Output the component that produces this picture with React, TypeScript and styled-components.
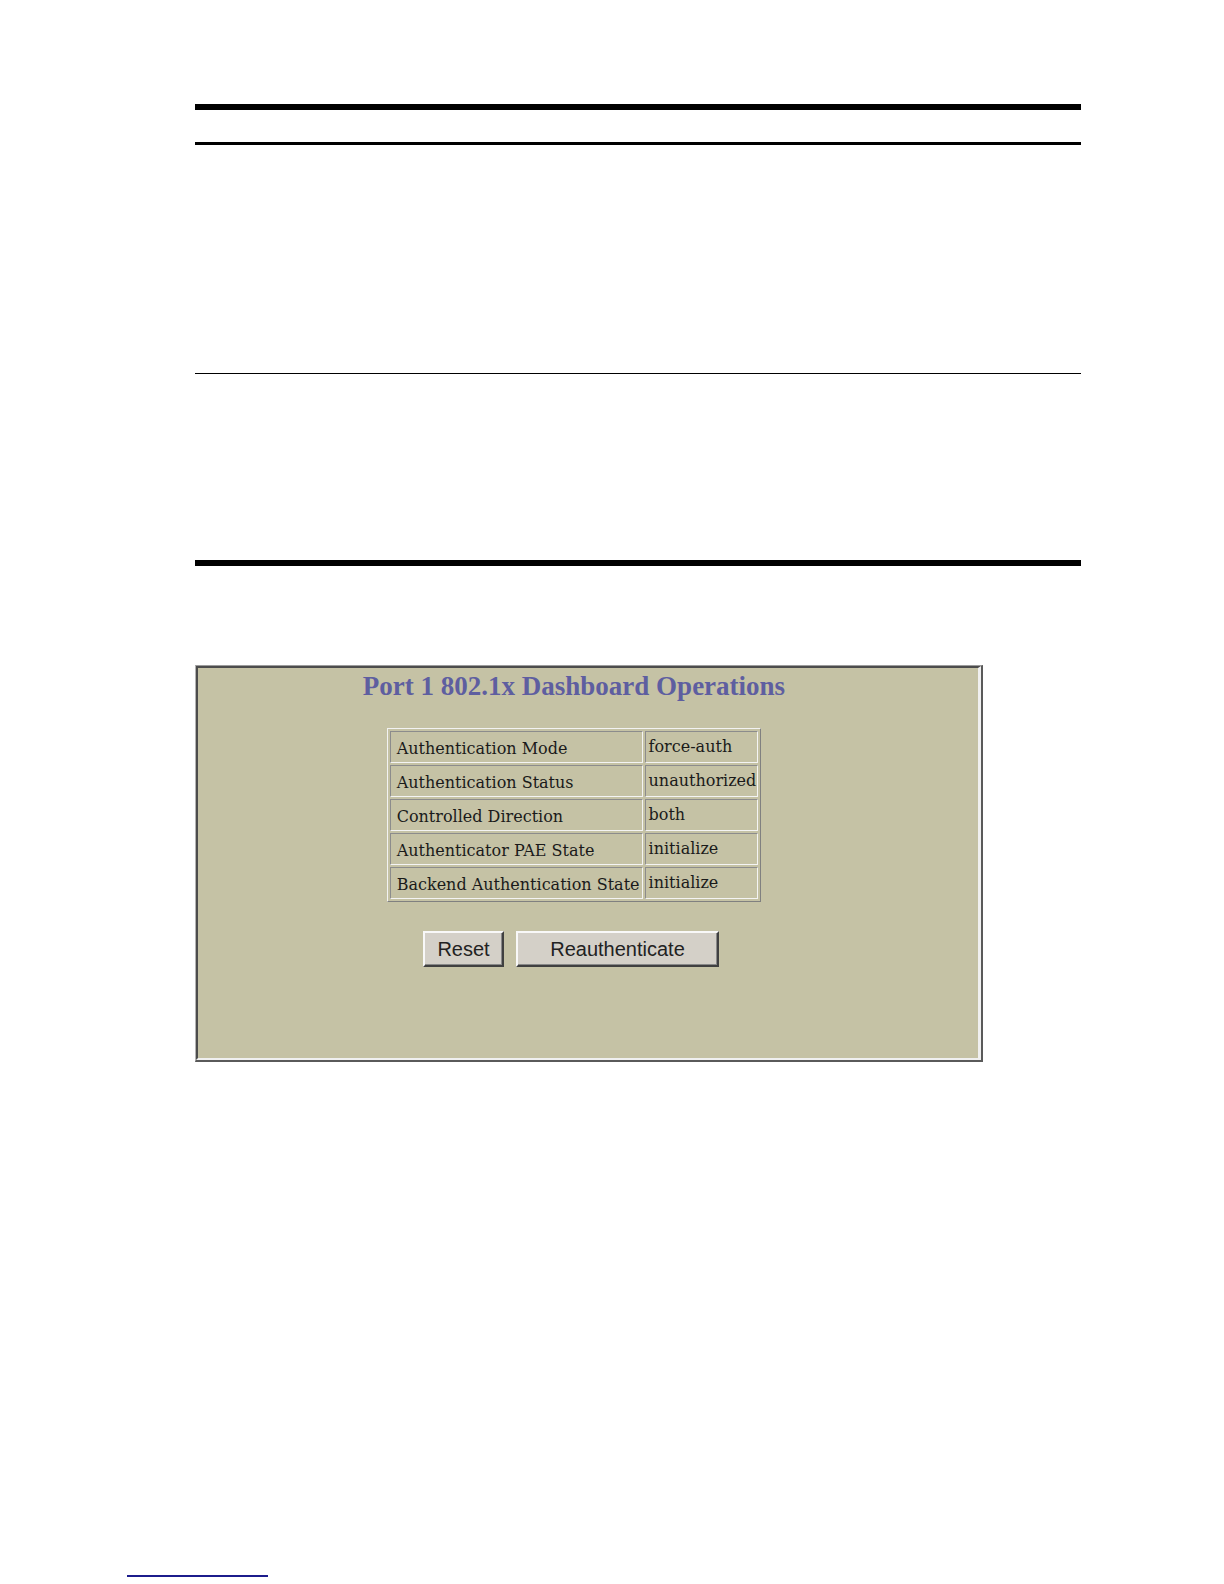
import styled, { createGlobalStyle } from "styled-components";

const GlobalStyle = createGlobalStyle`
  html, body {
    margin: 0;
    padding: 0;
    background: #fff;
  }
  body {
    font-family: "Liberation Serif", "Times New Roman", serif;
    color: #000;
  }
`;

const Page = styled.div`
  width: 1224px;
  height: 1584px;
  padding: 104px 0 0 195px;
  box-sizing: border-box;
  display: flex;
  flex-direction: column;
`;

const Rule = styled.div<{ $h: number; $gap: number }>`
  width: 886px;
  height: ${(p) => p.$h}px;
  margin-top: ${(p) => p.$gap}px;
  background: #000;
`;

const Frame = styled.div`
  margin-top: 99px;
  width: 788px;
  height: 397px;
  box-sizing: border-box;
  border-style: solid;
  border-width: 1px 2px 2px 1px;
  border-color: #9c9c9c #5a5a5a #5a5a5a #b4b4b4;
`;

const Panel = styled.div`
  height: 100%;
  box-sizing: border-box;
  border-style: solid;
  border-width: 2px 3px 2px 2px;
  border-color: #4c4c4c #f0f0f0 #f0f0f0 #4c4c4c;
  background: #c5c2a5;
  padding: 3px 28px 0 0;
  display: flex;
  flex-direction: column;
  align-items: center;
`;

const Title = styled.h1`
  margin: 0;
  font-family: "Liberation Serif", "Times New Roman", serif;
  font-size: 27px;
  line-height: 30px;
  font-weight: bold;
  color: #5e5ea0;
`;

const Table = styled.table`
  margin-top: 27px;
  border-collapse: separate;
  border-spacing: 2px;
  border-style: solid;
  border-width: 1px;
  border-color: #f2f2f2 #808080 #808080 #f2f2f2;
`;

const Cell = styled.td<{ $w: number; $value?: boolean }>`
  width: ${(p) => p.$w}px;
  height: 32px;
  box-sizing: border-box;
  padding: ${(p) => (p.$value ? "0 1px 1px 3px" : "3px 2px 0 6px")};
  border-style: solid;
  border-width: 1px;
  border-color: #8c8c8c #f4f4f4 #f4f4f4 #8c8c8c;
  font-family: "DejaVu Serif", "Liberation Serif", serif;
  font-size: 16px;
  color: #1a1a1a;
  white-space: nowrap;
`;

const Buttons = styled.div`
  margin: 29px 6px 0 0;
  display: flex;
  gap: 12px;
`;

const Button = styled.button<{ $w: number }>`
  width: ${(p) => p.$w}px;
  height: 36px;
  padding: 0;
  background: #d4d0c8;
  border-style: solid;
  border-width: 2px;
  border-color: #f8f8f8 #404040 #404040 #f8f8f8;
  box-shadow: inset -1px -1px 0 #888;
  font-family: "Liberation Sans", Arial, sans-serif;
  font-size: 20px;
  color: #222;
`;

const FootLink = styled.div`
  margin: auto 0 7px -68px;
  width: 141px;
  height: 2px;
  background: #1c1c8c;
`;

const rows: [string, string][] = [
  ["Authentication Mode", "force-auth"],
  ["Authentication Status", "unauthorized"],
  ["Controlled Direction", "both"],
  ["Authenticator PAE State", "initialize"],
  ["Backend Authentication State", "initialize"],
];

export default function App() {
  return (
    <>
      <GlobalStyle />
      <Page>
        <Rule $h={6} $gap={0} />
        <Rule $h={3} $gap={32} />
        <Rule $h={1} $gap={228} />
        <Rule $h={6} $gap={186} />
        <Frame>
          <Panel>
            <Title>Port 1 802.1x Dashboard Operations</Title>
            <Table>
              <tbody>
                {rows.map(([label, value]) => (
                  <tr key={label}>
                    <Cell $w={252}>{label}</Cell>
                    <Cell $w={110} $value>
                      {value}
                    </Cell>
                  </tr>
                ))}
              </tbody>
            </Table>
            <Buttons>
              <Button $w={81}>Reset</Button>
              <Button $w={203}>Reauthenticate</Button>
            </Buttons>
          </Panel>
        </Frame>
        <FootLink />
      </Page>
    </>
  );
}
